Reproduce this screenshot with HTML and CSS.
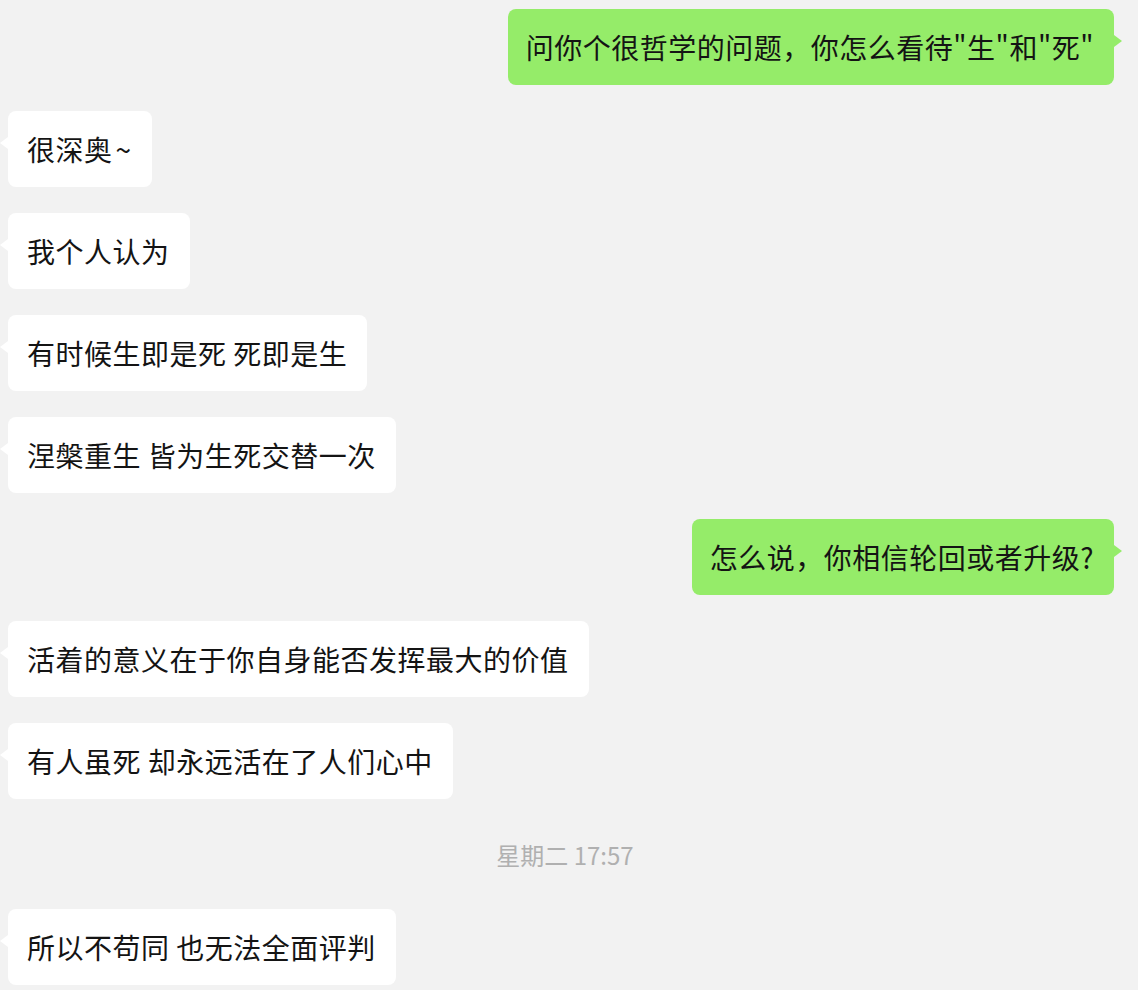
FILE: index.html
```html
<!DOCTYPE html>
<html lang="zh-CN">
<head>
<meta charset="utf-8">
<title>聊天</title>
<link rel="stylesheet" href="styles.css">
</head>
<body>
<div class="chat">
  <div class="row right"><div class="bubble me">问你个很哲学的问题，你怎么看待"生"和"死"</div></div>
  <div class="row"><div class="bubble other">很深奥<span class="tilde">~</span></div></div>
  <div class="row"><div class="bubble other">我个人认为</div></div>
  <div class="row"><div class="bubble other">有时候生即是死 死即是生</div></div>
  <div class="row"><div class="bubble other">涅槃重生 皆为生死交替一次</div></div>
  <div class="row right"><div class="bubble me">怎么说，你相信轮回或者升级?</div></div>
  <div class="row"><div class="bubble other">活着的意义在于你自身能否发挥最大的价值</div></div>
  <div class="row"><div class="bubble other">有人虽死 却永远活在了人们心中</div></div>
  <div class="time">星期二 17:57</div>
  <div class="row"><div class="bubble other">所以不苟同 也无法全面评判</div></div>
</div>
</body>
</html>
```
FILE: styles.css
```css
html, body {
  margin: 0;
  padding: 0;
  background: #f2f2f2;
}
body {
  font-family: "Noto Sans CJK SC", "Noto Sans", sans-serif;
  color: #141414;
}
.chat {
  display: flex;
  flex-direction: column;
  gap: 26px;
  padding: 9px 24px 0 8px;
}
.row {
  display: flex;
  justify-content: flex-start;
}
.row.right {
  justify-content: flex-end;
}
.bubble {
  position: relative;
  font-size: 28px;
  line-height: 40px;
  letter-spacing: 0.5px;
  padding: 18px 20px 18px 19px;
  border-radius: 8px;
  white-space: nowrap;
}
.tilde {
  padding-left: 3px;
}
.bubble.other {
  background: #ffffff;
}
.bubble.me {
  background: #95ec69;
  padding: 18px 20px 18px 18px;
}
.bubble::before {
  content: "";
  position: absolute;
  top: 26px;
  width: 0;
  height: 0;
  border-top: 6px solid transparent;
  border-bottom: 6px solid transparent;
}
.bubble.other::before {
  left: -8px;
  border-right: 8px solid #ffffff;
}
.bubble.me::before {
  right: -8px;
  border-left: 8px solid #95ec69;
}
.time {
  height: 58px;
  display: flex;
  align-items: center;
  justify-content: center;
  font-size: 24px;
  color: #b0b0b0;
  padding-left: 8px;
}
```
